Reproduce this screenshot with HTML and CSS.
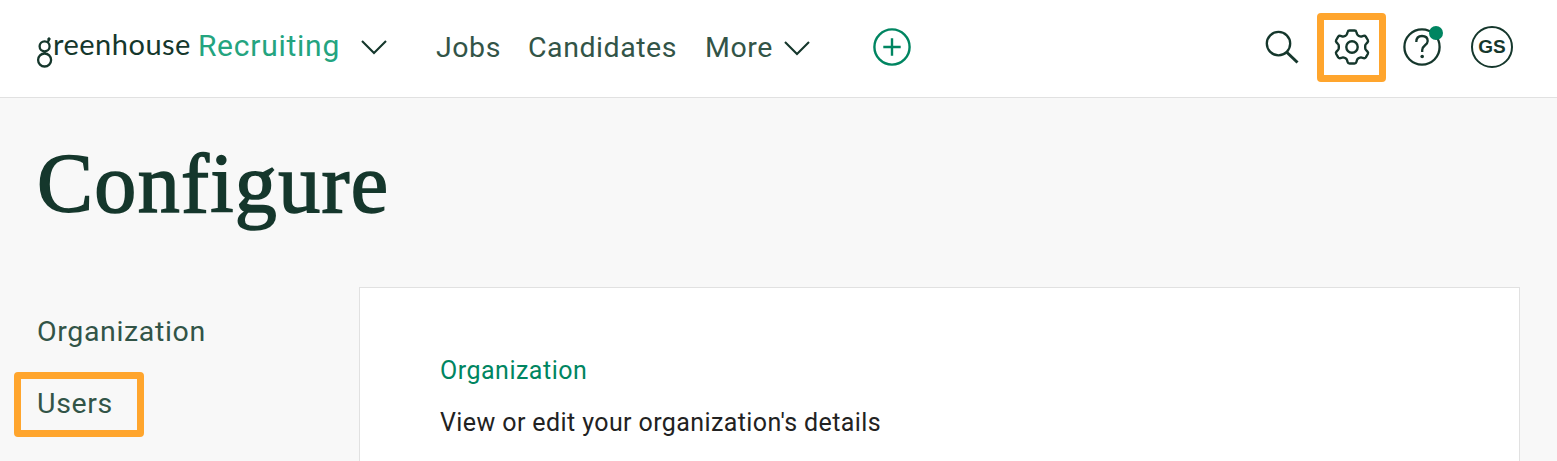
FILE: index.html
```html
<!DOCTYPE html>
<html lang="en">
<head>
    <meta charset="UTF-8">
    <meta name="viewport" content="width=device-width, initial-scale=1.0">
    <title>Configure</title>
    <link rel="stylesheet" href="styles.css">
</head>
<body>
    <header class="topbar">
        <a class="logo" href="#" aria-label="greenhouse Recruiting">
            <svg class="logo-mark" width="17" height="34" viewBox="0 0 17 34" fill="none" stroke="#15372c" stroke-width="2.3">
                <circle cx="8.6" cy="12.3" r="5"/>
                <circle cx="8.6" cy="26" r="6.5"/>
                <path d="M8.6 19.5V17.2M11.7 8.5L13 5.5"/>
                <circle cx="13" cy="5" r="1.2" fill="#15372c" stroke-width="1"/>
            </svg>
            <span class="logo-name">reenhouse</span>
            <span class="logo-product">Recruiting</span>
        </a>
        <svg class="chevron chevron-logo" width="28" height="16" viewBox="0 0 28 16"><path d="M2 2L14 14L26 2"/></svg>
        <nav class="nav">
            <a class="nav-jobs" href="#">Jobs</a>
            <a class="nav-candidates" href="#">Candidates</a>
            <a class="nav-more" href="#">More</a>
            <svg class="chevron chevron-more" width="28" height="16" viewBox="0 0 28 16"><path d="M2 2L14 14L26 2"/></svg>
        </nav>
        <button class="icon-button add" aria-label="Add">
            <svg width="38" height="38" viewBox="0 0 38 38" fill="none" stroke="#008561" stroke-width="2.4"><circle cx="19" cy="19" r="17.6"/><path d="M19 10.3V27.7M10.3 19H27.7"/></svg>
        </button>
        <div class="tools">
            <button class="icon-button search" aria-label="Search">
                <svg width="34" height="34" viewBox="0 0 34 34" fill="none" stroke="#15372c" stroke-width="2.3"><circle cx="13.5" cy="13.6" r="11.7"/><path d="M21.5 22L32.5 32.5" stroke-width="3"/></svg>
            </button>
            <button class="icon-button settings highlight" aria-label="Configure">
                <svg width="36" height="36" viewBox="0 0 36 36" fill="none" stroke="#15372c" stroke-width="2.4" stroke-linejoin="round"><circle cx="18" cy="18" r="5.7"/><path d="M15.5 1.5H20.5Q22 1.5 22.4 3L23 5Q23.4 6.3 24.7 6.8L25.5 7.2Q26.7 7.8 28 7.3L29.5 6.8Q31 6.4 31.8 7.6L33.8 11Q34.5 12.3 33.5 13.4L32 15Q31.2 15.8 31.2 17V19Q31.2 20.2 32 21L33.5 22.6Q34.5 23.7 33.8 25L31.8 28.4Q31 29.6 29.5 29.2L28 28.7Q26.7 28.2 25.5 28.8L24.7 29.2Q23.4 29.7 23 31L22.4 33Q22 34.5 20.5 34.5H15.5Q14 34.5 13.6 33L13 31Q12.6 29.7 11.3 29.2L10.5 28.8Q9.3 28.2 8 28.7L6.5 29.2Q5 29.6 4.2 28.4L2.2 25Q1.5 23.7 2.5 22.6L4 21Q4.8 20.2 4.8 19V17Q4.8 15.8 4 15L2.5 13.4Q1.5 12.3 2.2 11L4.2 7.6Q5 6.4 6.5 6.8L8 7.3Q9.3 7.8 10.5 7.2L11.3 6.8Q12.6 6.3 13 5L13.6 3Q14 1.5 15.5 1.5Z"/></svg>
            </button>
            <button class="icon-button help" aria-label="Help">
                <svg width="38" height="38" viewBox="0 0 38 38" fill="none" stroke="#15372c" stroke-width="2.3"><circle cx="19" cy="19" r="17.6"/><path d="M13.3 14C13.3 10 15.5 8 19 8C22.5 8 24.7 10 24.7 13C24.7 17.5 19.2 17 19.2 22V24"/><circle cx="19.2" cy="28.5" r="1.8" fill="#15372c" stroke="none"/></svg>
                <span class="dot"></span>
            </button>
            <button class="avatar">GS</button>
        </div>
    </header>

    <main>
        <h1>Configure</h1>
        <div class="content">
            <aside class="sidebar">
                <a class="side-organization" href="#">Organization</a>
                <a class="side-users highlight" href="#">Users</a>
            </aside>
            <section class="panel">
                <a class="panel-title" href="#">Organization</a>
                <p>View or edit your organization's details</p>
            </section>
        </div>
    </main>
</body>
</html>
```
FILE: styles.css
```css
* {
    box-sizing: border-box;
}
body {
    margin: 0;
    height: 461px;
    overflow: hidden;
    background: #f8f8f8;
    color: #222;
    font-family: Roboto, "Liberation Sans", sans-serif;
}
a {
    color: inherit;
    text-decoration: none;
    white-space: nowrap;
}
svg {
    display: block;
    flex: none;
}
button {
    padding: 0;
    border: none;
    background: none;
}
.topbar {
    display: flex;
    align-items: center;
    height: 98px;
    padding: 0 44px 4px 36px;
    background: #fff;
    border-bottom: 1px solid #e1e1e1;
}
.logo {
    display: flex;
    align-items: center;
    width: 304px;
    height: 38px;
    color: #15372c;
}
.logo-mark {
    margin-top: 8px;
}
.logo-name {
    width: 145px;
    padding-bottom: 5px;
    font-family: Lato, sans-serif;
    font-size: 29px;
    letter-spacing: 0.5px;
    line-height: 38px;
}
.logo-product {
    padding-bottom: 2px;
    color: #24a47f;
    font-size: 30px;
    letter-spacing: 0.75px;
    line-height: 38px;
}
.chevron {
    fill: none;
    stroke: #15372c;
    stroke-width: 2.1;
}
.chevron-logo {
    margin-left: 20px;
}
.chevron-more {
    margin-top: 2px;
}
.nav {
    display: flex;
    align-items: center;
    width: 375px;
    margin-left: 48px;
    color: #325447;
    font-size: 28.5px;
    letter-spacing: 0.55px;
    line-height: 38px;
}
.nav a {
    padding-top: 2px;
}
.nav-jobs {
    width: 92px;
}
.nav-candidates {
    width: 177px;
}
.nav-more {
    width: 78px;
}
.icon-button {
    display: flex;
    align-items: center;
    justify-content: center;
}
.add {
    margin-left: 62px;
}
.tools {
    display: flex;
    align-items: center;
    margin-left: auto;
}
.highlight {
    border: 7px solid #ffa52d;
    border-radius: 4px;
}
.settings {
    width: 69px;
    height: 69px;
    margin: 1px 17px 0 18px;
}
.help {
    position: relative;
    margin-right: 30px;
}
.dot {
    position: absolute;
    top: -2px;
    right: -2px;
    width: 14px;
    height: 14px;
    border-radius: 50%;
    background: #008561;
}
.avatar {
    width: 42px;
    height: 42px;
    border: 2px solid #15372c;
    border-radius: 50%;
    color: #15372c;
    font-family: "Liberation Sans", sans-serif;
    font-size: 19px;
    font-weight: bold;
}
h1 {
    height: 189px;
    margin: 0;
    padding: 38px 0 0 37px;
    color: #15372c;
    font-family: "Liberation Serif", serif;
    font-size: 84px;
    font-weight: normal;
    letter-spacing: 1.3px;
    line-height: 96px;
    -webkit-text-stroke: 1.6px #15372c;
}
.content {
    display: flex;
    height: 174px;
}
.sidebar {
    display: flex;
    flex-direction: column;
    align-items: flex-start;
    width: 359px;
    padding: 26px 0 0 14px;
    color: #325447;
    font-size: 28.5px;
    letter-spacing: 0.65px;
    line-height: 38px;
}
.side-organization {
    padding-left: 23px;
}
.side-users {
    width: 130px;
    height: 65px;
    margin-top: 21px;
    padding: 5px 0 0 16px;
    line-height: 40px;
}
.panel {
    width: 1161px;
    padding: 67px 80px;
    background: #fff;
    border: 1px solid #e1e1e1;
    border-bottom: none;
    font-size: 25px;
    letter-spacing: 0.4px;
    line-height: 32px;
}
.panel-title {
    display: block;
    color: #008561;
    letter-spacing: 0.5px;
}
.panel p {
    margin: 20px 0 0;
}
```
